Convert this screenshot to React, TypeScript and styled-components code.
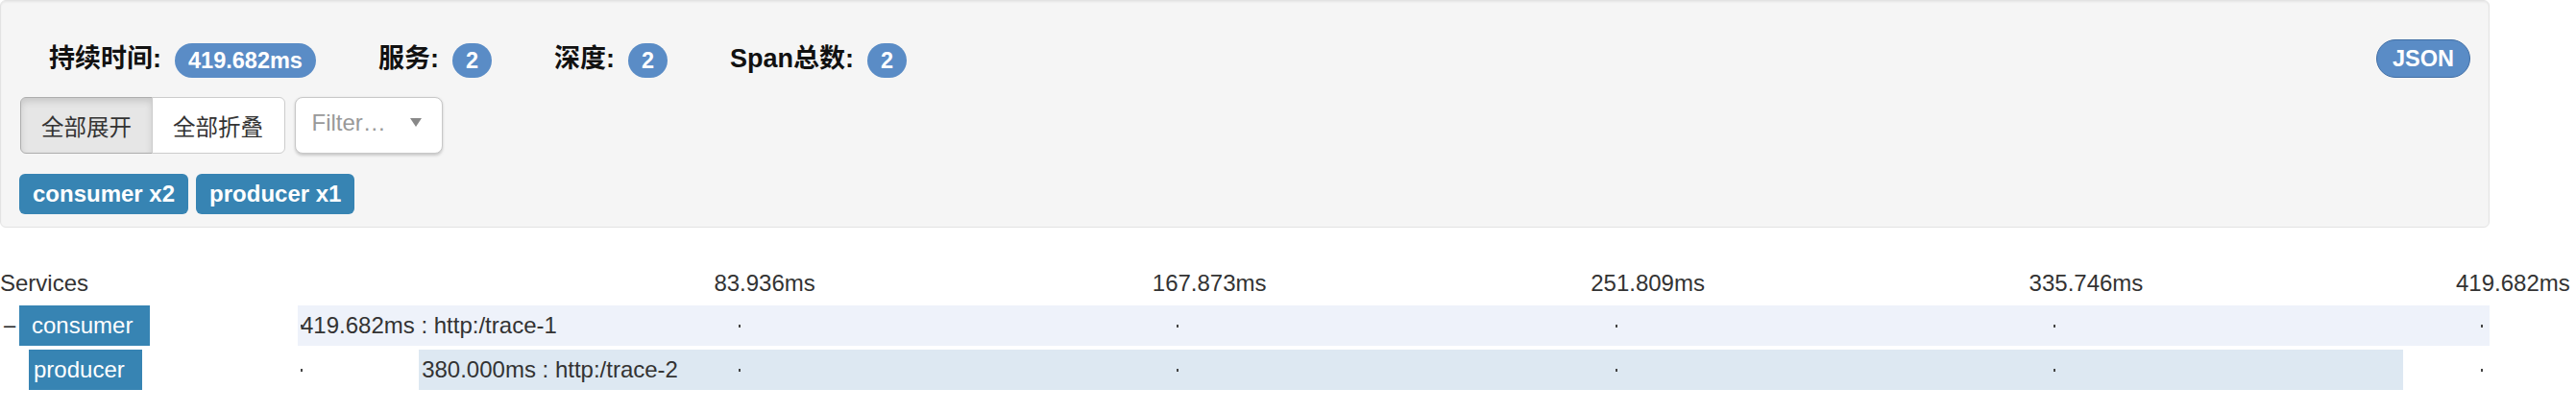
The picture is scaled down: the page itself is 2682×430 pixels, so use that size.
import React from "react";
import styled, { createGlobalStyle } from "styled-components";

const GlobalStyle = createGlobalStyle`
  html, body {
    margin: 0;
    padding: 0;
    background: #fff;
  }
  body {
    font-family: "Liberation Sans", "Noto Sans CJK SC", Arial, sans-serif;
    color: #333;
  }
`;

const Page = styled.div`
  width: 2592px;
`;

const Well = styled.div`
  box-sizing: border-box;
  height: 237px;
  padding: 40px 19px 0 19px;
  background: #f5f5f5;
  border: 1.5px solid #e3e3e3;
  border-radius: 6px;
  box-shadow: inset 0 1.5px 1.5px rgba(0, 0, 0, 0.05);
`;

const StatsRow = styled.div`
  display: flex;
  align-items: flex-end;
  height: 40px;
  padding-left: 31px;
`;

const Stat = styled.div`
  display: flex;
  align-items: flex-end;
  margin-right: 65px;
`;

const StatLabel = styled.span`
  font-size: 27px;
  font-weight: bold;
  line-height: 40px;
  color: #111;
  margin-right: 14px;
`;

const Badge = styled.span`
  display: inline-flex;
  align-items: center;
  height: 36px;
  padding: 0 14px;
  border-radius: 18px;
  background: #5a8cc6;
  color: #fff;
  font-size: 23.5px;
  font-weight: bold;
`;

const JsonButton = styled.button`
  margin-left: auto;
  height: 40px;
  padding: 0 16px;
  border-radius: 20px;
  border: 1.5px solid #406ea5;
  background: #5a8cc6;
  color: #fff;
  font-family: "Liberation Sans", Arial, sans-serif;
  font-size: 23.5px;
  font-weight: bold;
`;

const Toolbar = styled.div`
  display: flex;
  gap: 10px;
  margin-top: 20px;
  padding-left: 1px;
`;

const BtnGroup = styled.div`
  display: flex;
`;

const GroupButton = styled.button<{ $active?: boolean; $last?: boolean }>`
  box-sizing: border-box;
  width: ${(p) => (p.$last ? "139px" : "138px")};
  height: 59px;
  margin-left: ${(p) => (p.$last ? "-1.5px" : "0")};
  padding: 0;
  font-family: "Liberation Sans", "Noto Sans CJK SC", sans-serif;
  font-size: 23.5px;
  color: #333;
  background: ${(p) => (p.$active ? "#e6e6e6" : "#fff")};
  border: 1.5px solid ${(p) => (p.$active ? "#adadad" : "#ccc")};
  border-radius: ${(p) => (p.$last ? "0 6px 6px 0" : "6px 0 0 6px")};
  box-shadow: ${(p) => (p.$active ? "inset 0 4px 7px rgba(0,0,0,0.125)" : "none")};
`;

const FilterBox = styled.div`
  box-sizing: border-box;
  width: 154px;
  height: 59px;
  display: flex;
  align-items: center;
  justify-content: space-between;
  padding: 0 21px 6px 17px;
  background: #fff;
  border: 1.5px solid #c8c8c8;
  border-radius: 8px;
  box-shadow: 0 1.5px 3px rgba(0, 0, 0, 0.18);
`;

const Placeholder = styled.span`
  font-size: 24px;
  color: #999;
`;

const Tags = styled.div`
  display: flex;
  gap: 8px;
  margin-top: 21px;
`;

const Tag = styled.span`
  display: inline-flex;
  align-items: center;
  height: 42px;
  padding: 0 14px;
  border-radius: 6px;
  background: #3784b3;
  color: #fff;
  font-size: 24px;
  font-weight: bold;
`;

const TimeHeader = styled.div`
  display: flex;
  height: 34px;
  margin-top: 41px;
  font-size: 24px;
  line-height: 34px;
  color: #333;
`;

const NameCol = styled.div<{ $indent?: number }>`
  flex: 0 0 310px;
  display: flex;
  align-items: stretch;
  padding-left: ${(p) => p.$indent ?? 0}px;
  box-sizing: border-box;
`;

const Scale = styled.div`
  position: relative;
  flex: 1;
`;

const Marker = styled.span`
  position: absolute;
  top: 0;
  white-space: nowrap;
`;

const Rows = styled.div`
  display: flex;
  flex-direction: column;
  gap: 4px;
  margin-top: 6px;
`;

const Row = styled.div`
  display: flex;
  height: 42px;
  font-size: 24px;
  line-height: 42px;
`;

const Toggle = styled.span`
  width: 20px;
  text-align: center;
  font-size: 22px;
  color: #222;
`;

const ServiceName = styled.span<{ $lead: number }>`
  background: #3784b3;
  color: #fff;
  padding: 0 18px 0 ${(p) => p.$lead}px;
  white-space: nowrap;
`;

const Track = styled.div`
  position: relative;
  flex: 1;
`;

const Bar = styled.div<{ $shade: string }>`
  position: absolute;
  top: 0;
  bottom: 0;
  background: ${(p) => p.$shade};
  padding-left: 3px;
  box-sizing: border-box;
  white-space: nowrap;
  color: #333;
`;

const Tick = styled.span`
  position: absolute;
  z-index: 1;
  top: 20px;
  width: 2px;
  height: 3px;
  background: #444;
`;

const Caret = () => (
  <svg width="12" height="9" viewBox="0 0 12 9">
    <path d="M0 0 L12 0 L6 9 Z" fill="#888" />
  </svg>
);

const total = 419.682;

const stats = [
  { label: "持续时间:", value: "419.682ms" },
  { label: "服务:", value: "2" },
  { label: "深度:", value: "2" },
  { label: "Span总数:", value: "2" },
];

const markers = [
  { text: "83.936ms", pct: 20, offset: -23 },
  { text: "167.873ms", pct: 40, offset: -23 },
  { text: "251.809ms", pct: 60, offset: -23 },
  { text: "335.746ms", pct: 80, offset: -23 },
  { text: "419.682ms", pct: 100, offset: -35 },
];

const ticks = [
  { pct: 0, offset: 3 },
  { pct: 20, offset: 3 },
  { pct: 40, offset: 2 },
  { pct: 60, offset: 3 },
  { pct: 80, offset: 2 },
  { pct: 100, offset: -9 },
];

const spans = [
  {
    service: "consumer",
    toggle: true,
    indent: 0,
    lead: 13,
    start: 0,
    duration: 419.682,
    label: "419.682ms : http:/trace-1",
    shade: "#eef2fa",
  },
  {
    service: "producer",
    toggle: false,
    indent: 30,
    lead: 5,
    start: 23.2,
    duration: 380,
    label: "380.000ms : http:/trace-2",
    shade: "#dde8f2",
  },
];

const App: React.FC = () => {
  return (
    <Page>
      <GlobalStyle />
      <Well>
        <StatsRow>
          {stats.map((s) => (
            <Stat key={s.label}>
              <StatLabel>{s.label}</StatLabel>
              <Badge>{s.value}</Badge>
            </Stat>
          ))}
          <JsonButton>JSON</JsonButton>
        </StatsRow>
        <Toolbar>
          <BtnGroup>
            <GroupButton $active>全部展开</GroupButton>
            <GroupButton $last>全部折叠</GroupButton>
          </BtnGroup>
          <FilterBox>
            <Placeholder>Filter…</Placeholder>
            <Caret />
          </FilterBox>
        </Toolbar>
        <Tags>
          <Tag>consumer x2</Tag>
          <Tag>producer x1</Tag>
        </Tags>
      </Well>

      <TimeHeader>
        <NameCol>Services</NameCol>
        <Scale>
          {markers.map((m) => (
            <Marker key={m.text} style={{ left: `calc(${m.pct}% + ${m.offset}px)` }}>
              {m.text}
            </Marker>
          ))}
        </Scale>
      </TimeHeader>

      <Rows>
        {spans.map((span) => (
          <Row key={span.service}>
            <NameCol $indent={span.indent}>
              {span.toggle && <Toggle>–</Toggle>}
              <ServiceName $lead={span.lead}>{span.service}</ServiceName>
            </NameCol>
            <Track>
              <Bar
                $shade={span.shade}
                style={{
                  left: `${(span.start / total) * 100}%`,
                  width: `${(span.duration / total) * 100}%`,
                }}
              >
                {span.label}
              </Bar>
              {ticks.map((t) => (
                <Tick key={t.pct} style={{ left: `calc(${t.pct}% + ${t.offset}px)` }} />
              ))}
            </Track>
          </Row>
        ))}
      </Rows>
    </Page>
  );
};

export default App;
